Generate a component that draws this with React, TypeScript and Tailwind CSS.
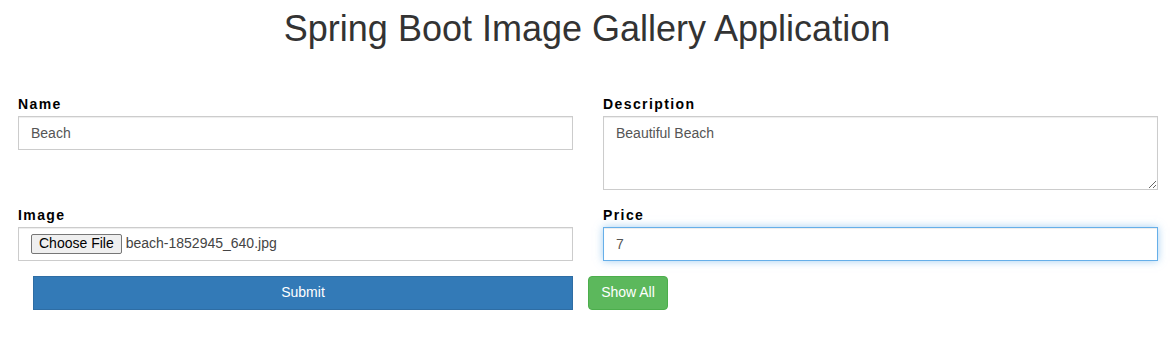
import React from 'react'

const inputBase =
  'block w-full h-[34px] border border-[#cccccc] bg-white px-3 py-[6px] text-[14px] text-[#555555] shadow-[inset_0_1px_1px_rgba(0,0,0,0.075)] outline-none'

function Field({ label, children }: { label: string; children: React.ReactNode }) {
  return (
    <div className="flex flex-col">
      <label className="mb-[3px] block text-[14px] font-bold leading-[17px] tracking-[1.4px] text-black">
        {label}
      </label>
      {children}
    </div>
  )
}

export default function App() {
  return (
    <div className="min-h-screen bg-white font-['Liberation_Sans',Arial,sans-serif] text-[14px] text-[#333333]">
      <h1 className="pt-[9px] text-center text-[36px] font-normal leading-[1.1] text-[#333333]">
        Spring Boot Image Gallery Application
      </h1>

      <form className="pt-[47px] pl-[18px] pr-[16px]" onSubmit={e => e.preventDefault()}>
        <div className="grid grid-cols-2 gap-x-[30px] gap-y-[17px]">
          <Field label="Name">
            <input className={inputBase} defaultValue="Beach" />
          </Field>
          <Field label="Description">
            <textarea
              className="block h-[74px] w-full border border-[#cccccc] bg-white px-3 py-[6px] text-[14px] leading-[20px] text-[#555555] shadow-[inset_0_1px_1px_rgba(0,0,0,0.075)] outline-none"
              defaultValue="Beautiful Beach"
            />
          </Field>
          <Field label="Image">
            <div className={`${inputBase} flex items-center`}>
              <span className="mr-[4px] flex h-[20px] items-center rounded-[2px] border border-[#767676] bg-[#efefef] px-[7px] text-[14px] text-black">
                Choose File
              </span>
              <span className="text-[14px] text-[#444444]">beach-1852945_640.jpg</span>
            </div>
          </Field>
          <Field label="Price">
            <input
              className="block h-[34px] w-full border border-[#66afe9] bg-white px-3 py-[6px] text-[14px] text-[#555555] shadow-[inset_0_1px_1px_rgba(0,0,0,0.075),0_0_8px_rgba(102,175,233,0.6)] outline-none"
              defaultValue="7"
            />
          </Field>
        </div>

        <div className="mt-[15px] flex">
          <div className="w-[555px] pl-[15px]">
            <button
              type="submit"
              className="h-[34px] w-full border border-[#2e6da4] bg-[#337ab7] text-[14px] text-white"
            >
              Submit
            </button>
          </div>
          <button
            type="button"
            className="ml-[15px] h-[34px] w-[80px] rounded-[4px] border border-[#4cae4c] bg-[#5cb85c] text-[14px] text-white"
          >
            Show All
          </button>
        </div>
      </form>
    </div>
  )
}
